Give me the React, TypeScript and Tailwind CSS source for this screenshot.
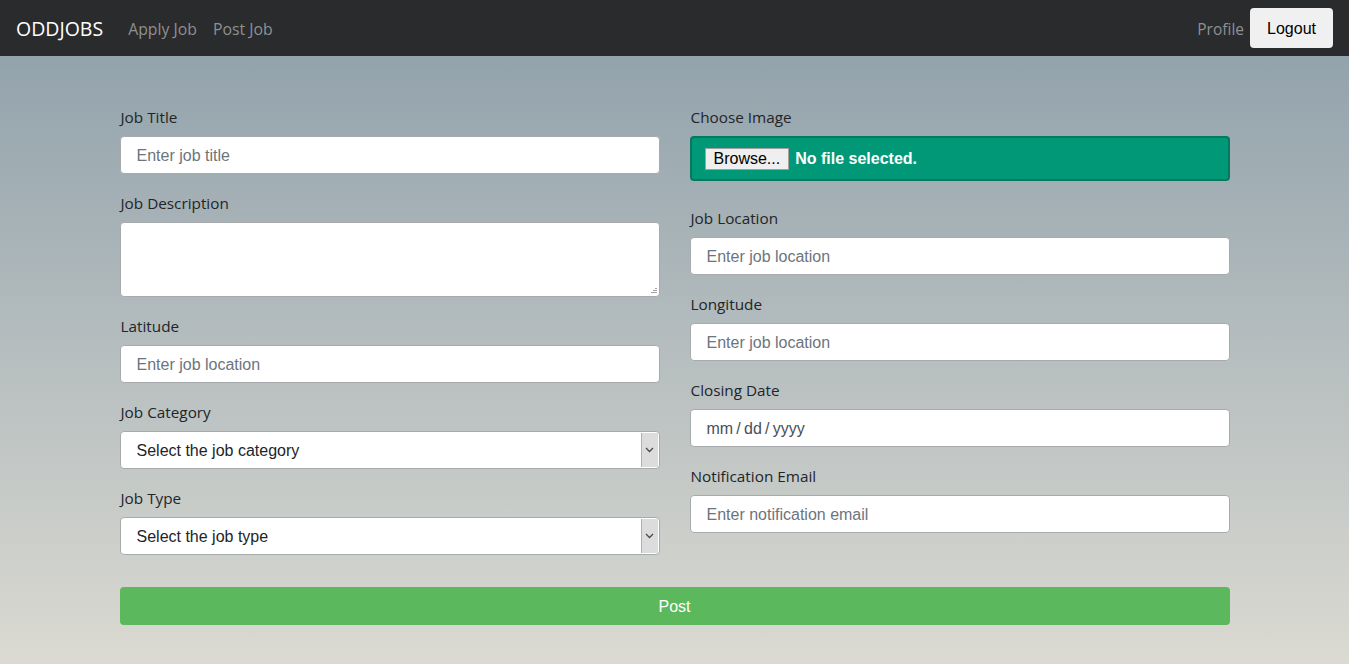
import React from 'react';

const labelFont = { fontFamily: '"Open Sans", "Noto Sans", sans-serif' };

const Field = ({ label, children, className = '' }: { label: string; children: React.ReactNode; className?: string }) => (
  <div className={className}>
    <label className="block pt-[1px] pl-[1px] text-[15.3px] leading-6 text-[#212529] mb-[7px]" style={labelFont}>{label}</label>
    {children}
  </div>
);

const inputCls =
  'block w-full h-[38px] px-4 pt-[1px] bg-white border border-[#a7abae] rounded-[4px] text-[16px] text-[#495057] placeholder:text-[#6c757d] outline-none font-["Liberation_Sans",Arial,sans-serif]';

const SelectBox = ({ text }: { text: string }) => (
  <div className="relative h-[38px] w-full bg-white border border-[#a7abae] rounded-[4px]">
    <div className="h-full flex items-center pt-[1px] px-4 text-[16px] text-[#212529] font-['Liberation_Sans',Arial,sans-serif]">{text}</div>
    <div className="absolute right-[1px] top-[1px] bottom-[1px] w-[17px] bg-[#dcdcdc] border-l border-[#b0b0b0] flex items-center justify-center">
      <svg width="9" height="6" viewBox="0 0 9 6" fill="none">
        <path d="M1 1 L4.5 4.5 L8 1" stroke="#4a4a4a" strokeWidth="1.3" />
      </svg>
    </div>
  </div>
);

// firefox-style dotted resize grip
const Grip = () => (
  <svg className="absolute right-[3px] bottom-[3px]" width="7" height="7" viewBox="0 0 7 7">
    <rect x="5" y="1" width="2" height="1" fill="#a0a0a0" />
    <rect x="3" y="3" width="2" height="1" fill="#a0a0a0" />
    <rect x="5" y="3" width="2" height="1" fill="#a0a0a0" />
    <rect x="1" y="5" width="2" height="1" fill="#a0a0a0" />
    <rect x="3" y="5" width="2" height="1" fill="#a0a0a0" />
    <rect x="5" y="5" width="2" height="1" fill="#a0a0a0" />
  </svg>
);

export default function App() {
  return (
    <div className="flex min-h-[664px] bg-white">
      <div className="w-[1349px] shrink-0 flex flex-col">
        <nav className="h-[56px] bg-[#2a2b2d] flex items-center px-4" style={labelFont}>
          <span className="text-white text-[19.5px] pt-[2px] mr-[25px]">ODDJOBS</span>
          <a className="text-[#8f9092] text-[15.8px] pt-[3px] mr-4">Apply Job</a>
          <a className="text-[#8f9092] text-[15.8px] pt-[3px]">Post Job</a>
          <div className="ml-auto flex items-center">
            <a className="text-[#8f9092] text-[15.5px] pt-[3px] mr-[6px]">Profile</a>
            <button className="h-[40px] w-[83px] pt-[1px] bg-[#f0f0f0] rounded-[4px] text-black text-[16px] font-['Liberation_Sans',Arial,sans-serif]">Logout</button>
          </div>
        </nav>
        <main className="flex-1 bg-gradient-to-b from-[#93a3ac] to-[#dbdad2] pt-[48px] pb-[39px]">
          <div className="w-[1110px] mx-auto">
            <div className="grid grid-cols-2 gap-x-[30px]">
              <div className="flex flex-col gap-4">
                <Field label="Job Title">
                  <input className={inputCls} placeholder="Enter job title" />
                </Field>
                <Field label="Job Description">
                  <div className="relative">
                    <textarea className="block w-full h-[75px] px-4 py-2 bg-white border border-[#a7abae] rounded-[4px] outline-none resize-none" />
                    <Grip />
                  </div>
                </Field>
                <Field label="Latitude">
                  <input className={inputCls} placeholder="Enter job location" />
                </Field>
                <Field label="Job Category">
                  <SelectBox text="Select the job category" />
                </Field>
                <Field label="Job Type">
                  <SelectBox text="Select the job type" />
                </Field>
              </div>
              <div className="flex flex-col gap-4">
                <Field label="Choose Image" className="mb-2">
                  <div className="h-[45px] bg-[#009877] border-2 border-[#037a60] rounded-[4px] flex items-center pt-[1px] px-[13px] gap-[6px] font-['Liberation_Sans',Arial,sans-serif]">
                    <span className="h-[22px] px-[8px] bg-[#efefef] border border-[#a0a0a0] text-black text-[16px] leading-[20px]">Browse...</span>
                    <span className="text-white font-bold text-[16px]">No file selected.</span>
                  </div>
                </Field>
                <Field label="Job Location">
                  <input className={inputCls} placeholder="Enter job location" />
                </Field>
                <Field label="Longitude">
                  <input className={inputCls} placeholder="Enter job location" />
                </Field>
                <Field label="Closing Date">
                  <div className={inputCls + ' flex items-center text-[#212529]'}>{'mm\u2009/\u2009dd\u2009/\u2009yyyy'}</div>
                </Field>
                <Field label="Notification Email">
                  <input className={inputCls} placeholder="Enter notification email" />
                </Field>
              </div>
            </div>
            <button className="mt-8 w-full h-[38px] pt-[1px] bg-[#5cb85c] rounded-[4px] text-white text-[16px] font-['Liberation_Sans',Arial,sans-serif]">Post</button>
          </div>
        </main>
      </div>
    </div>
  );
}
